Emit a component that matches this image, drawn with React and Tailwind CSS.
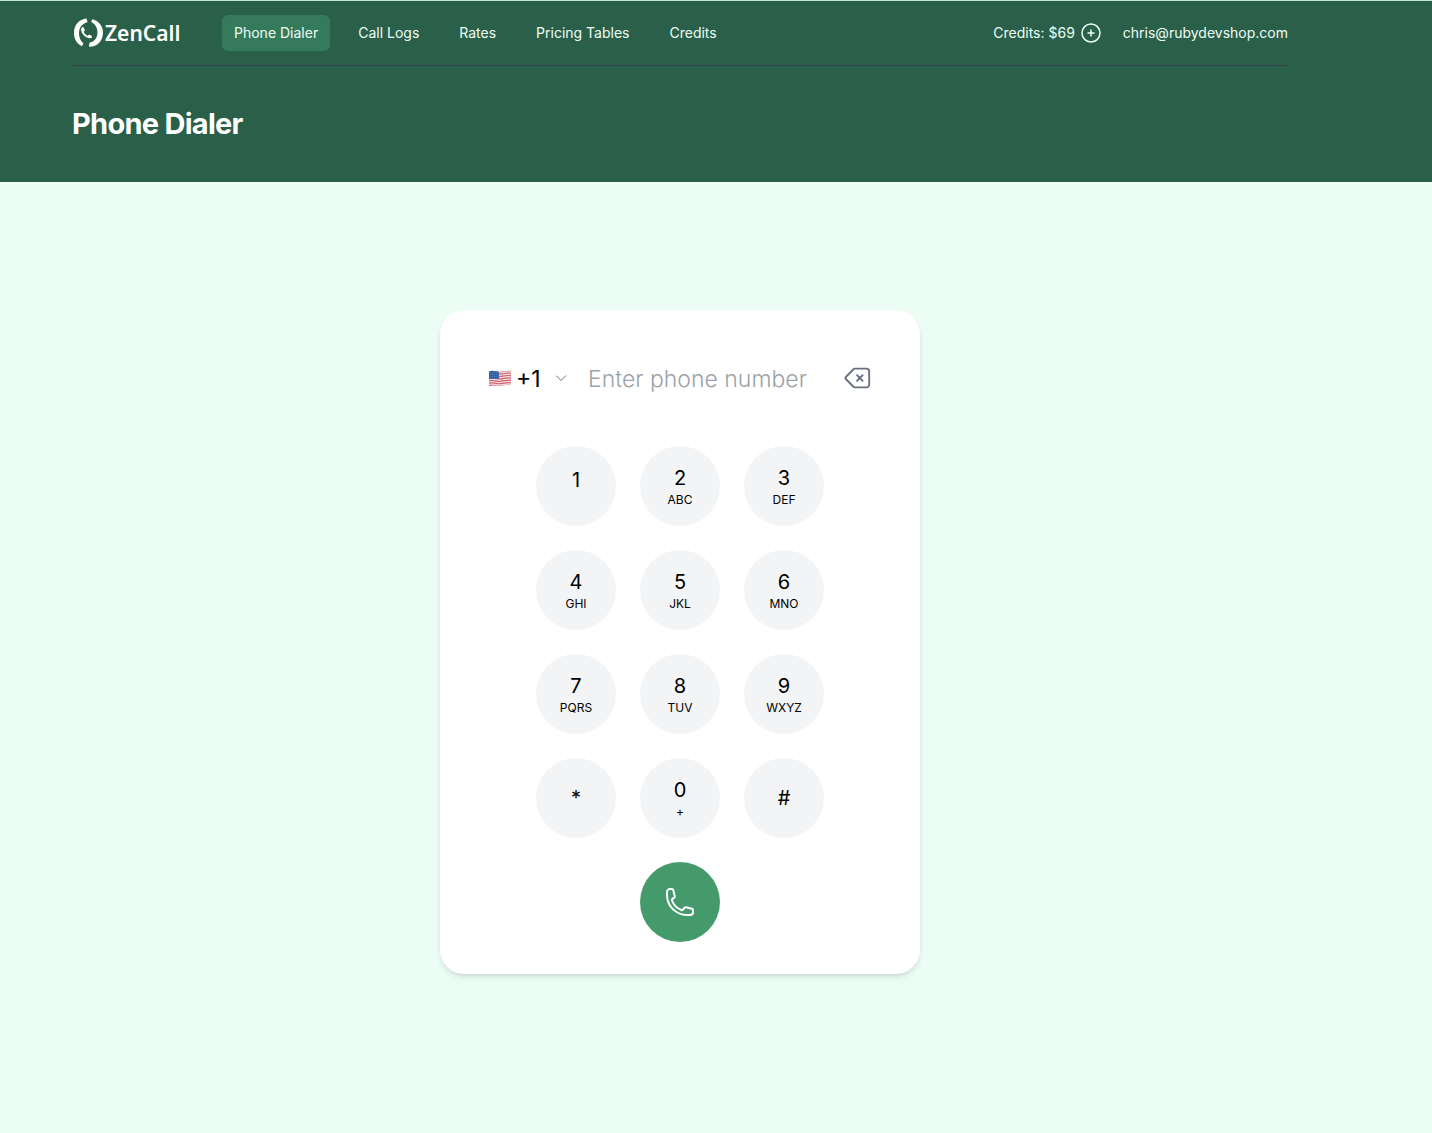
import React, { useState } from 'react';
import { HiOutlineBackspace, HiOutlinePhone, HiOutlinePlusCircle } from 'react-icons/hi2';

const navLinks = ['Phone Dialer', 'Call Logs', 'Rates', 'Pricing Tables', 'Credits'];

const keys = [
  { digit: '1', letters: '' },
  { digit: '2', letters: 'ABC' },
  { digit: '3', letters: 'DEF' },
  { digit: '4', letters: 'GHI' },
  { digit: '5', letters: 'JKL' },
  { digit: '6', letters: 'MNO' },
  { digit: '7', letters: 'PQRS' },
  { digit: '8', letters: 'TUV' },
  { digit: '9', letters: 'WXYZ' },
  { digit: '*' },
  { digit: '0', letters: '+' },
  { digit: '#' },
];

const Logo = () => (
  <a href="#" className="flex w-[110px] shrink-0 items-center text-white">
    <svg viewBox="0 0 33 32" className="h-8 w-[33px] shrink-0" fill="currentColor" aria-hidden="true">
      <path d="M14.500 1.600C7 2.200 2 8.200 2 16c0 6 3 11 8 13.200l1.400-3C8.500 24 7 20.600 7 16.200c0-4.500 1.600-7.500 5.200-9.700L15.600 5z" />
      <path d="M20.200 2.200l-1 2.700C23 6.700 25.500 10.700 25.500 15.200c0 4.500-1.600 7.300-4.500 9.200l-3.500 1.400-.500 4C25 30.200 31 23.700 31 15.700c0-6.500-4-12-10.800-13.500z" />
      <path
        transform="translate(1 2) scale(.83)"
        d="M11.300 9.500l1.600.600 1.500 3.400-1.500 1.800c.900 2.200 2.600 3.900 4.800 4.900l1.800-1.400 3.200 1.700.200 1.600c-1.400 1.500-3.800 1.400-6.200.200-3.400-1.700-6-4.700-6.800-8.200-.400-1.900.100-3.700 1.400-4.600z"
      />
    </svg>
    <span className="font-['Noto_Sans',sans-serif] text-[21px] leading-8 font-semibold">ZenCall</span>
  </a>
);

const UsFlag = () => (
  <svg viewBox="0 0 24 18" className="h-[18px] w-6 shrink-0" aria-hidden="true">
    <clipPath id="flag">
      <path d="M1 2.500c4-2 7 .600 11 .200 4-.300 7-1.700 11-.700v14c-4-1-7 .400-11 .700-4 .400-7-1.200-11 1z" />
    </clipPath>
    <g clipPath="url(#flag)">
      <rect width="24" height="18" fill="#f1e4e6" />
      <g fill="none" stroke="#d4626c" strokeWidth="1.200">
        <path d="M0 2.500c5-2 7 .600 12 .200s7-1.700 12-.700" />
        <path d="M0 4.900c5-2 7 .600 12 .200s7-1.700 12-.700" />
        <path d="M0 7.300c5-2 7 .600 12 .200s7-1.700 12-.700" />
        <path d="M0 9.700c5-2 7 .600 12 .200s7-1.700 12-.700" />
        <path d="M0 12.100c5-2 7 .600 12 .200s7-1.700 12-.700" />
        <path d="M0 14.500c5-2 7 .600 12 .200s7-1.700 12-.700" />
        <path d="M0 16.900c5-2 7 .600 12 .200s7-1.700 12-.700" />
      </g>
      <path d="M0 1h11v8.800c-4 .200-7-.800-11 .700z" fill="#2f62a3" />
      <path d="M2 3.500h9M2 5.500h9M2 7.500h9" stroke="#6f97c8" strokeWidth=".500" strokeDasharray="1 1" />
    </g>
  </svg>
);

const App = () => {
  const [number, setNumber] = useState('');

  return (
    <div className="min-h-screen bg-[#ecfdf5] font-[Inter,sans-serif] text-black">
      <header className="border-t border-[#c3e6d4] bg-[#2a6049] pr-[72px]">
        <div className="mx-auto max-w-7xl px-8">
          <nav className="flex h-[65px] items-center border-b border-[#374151] text-sm text-[#ecfdf5]">
            <Logo />
            <div className="ml-10 flex gap-4">
              {navLinks.map((link, index) => (
                <a
                  key={link}
                  href="#"
                  className={`rounded-md px-3 py-2 whitespace-nowrap ${index === 0 ? 'bg-[#357a5b]' : ''}`}
                >
                  {link}
                </a>
              ))}
            </div>
            <div className="ml-auto flex items-center gap-5">
              <a href="#" className="flex items-center gap-1">
                Credits: $69
                <HiOutlinePlusCircle className="size-6" />
              </a>
              <a href="#">chris@rubydevshop.com</a>
            </div>
          </nav>
          <h1 className="py-10 text-[29px] leading-9 font-bold tracking-tight text-white">Phone Dialer</h1>
        </div>
      </header>

      <main className="py-32 pr-[72px]">
        <div className="mx-auto max-w-[480px] rounded-3xl bg-white px-12 pt-12 pb-8 shadow-md">
          <div className="flex h-10 items-center text-[23px]">
            <UsFlag />
            <select aria-label="Country code" className="ml-1 h-10 w-8 appearance-none bg-transparent pt-0.5">
              <option>+1</option>
            </select>
            <svg viewBox="0 0 12 8" className="ml-2 h-2 w-3 shrink-0" fill="none" stroke="#6b7280" aria-hidden="true">
              <path d="M0 1.500l5 5 5-5" />
            </svg>
            <input
              aria-label="Phone number"
              type="tel"
              value={number}
              onChange={(e) => setNumber(e.target.value)}
              placeholder="Enter phone number"
              className="ml-5 h-10 min-w-0 flex-1 pt-0.5 font-light outline-none placeholder:text-[#9ca3a8]"
            />
            <button type="button" aria-label="Delete digit" onClick={() => setNumber(number.slice(0, -1))}>
              <HiOutlineBackspace className="size-[30px] text-gray-500" />
            </button>
          </div>

          <div className="mx-auto mt-12 grid w-72 grid-cols-3 gap-6">
            {keys.map(({ digit, letters }) => (
              <button
                key={digit}
                type="button"
                onClick={() => setNumber(number + digit)}
                className="flex size-20 flex-col items-center justify-center rounded-full bg-[#f3f4f6]"
              >
                <span className="text-xl leading-7">{digit}</span>
                {letters && <span className="text-xs leading-4">{letters}</span>}
                {letters === '' && <span className="h-3" />}
              </button>
            ))}
            <button
              type="button"
              aria-label="Call"
              className="col-start-2 flex size-20 items-center justify-center rounded-full bg-[#449a6b] text-white"
            >
              <HiOutlinePhone className="size-8" />
            </button>
          </div>
        </div>
      </main>
    </div>
  );
};

export default App;
